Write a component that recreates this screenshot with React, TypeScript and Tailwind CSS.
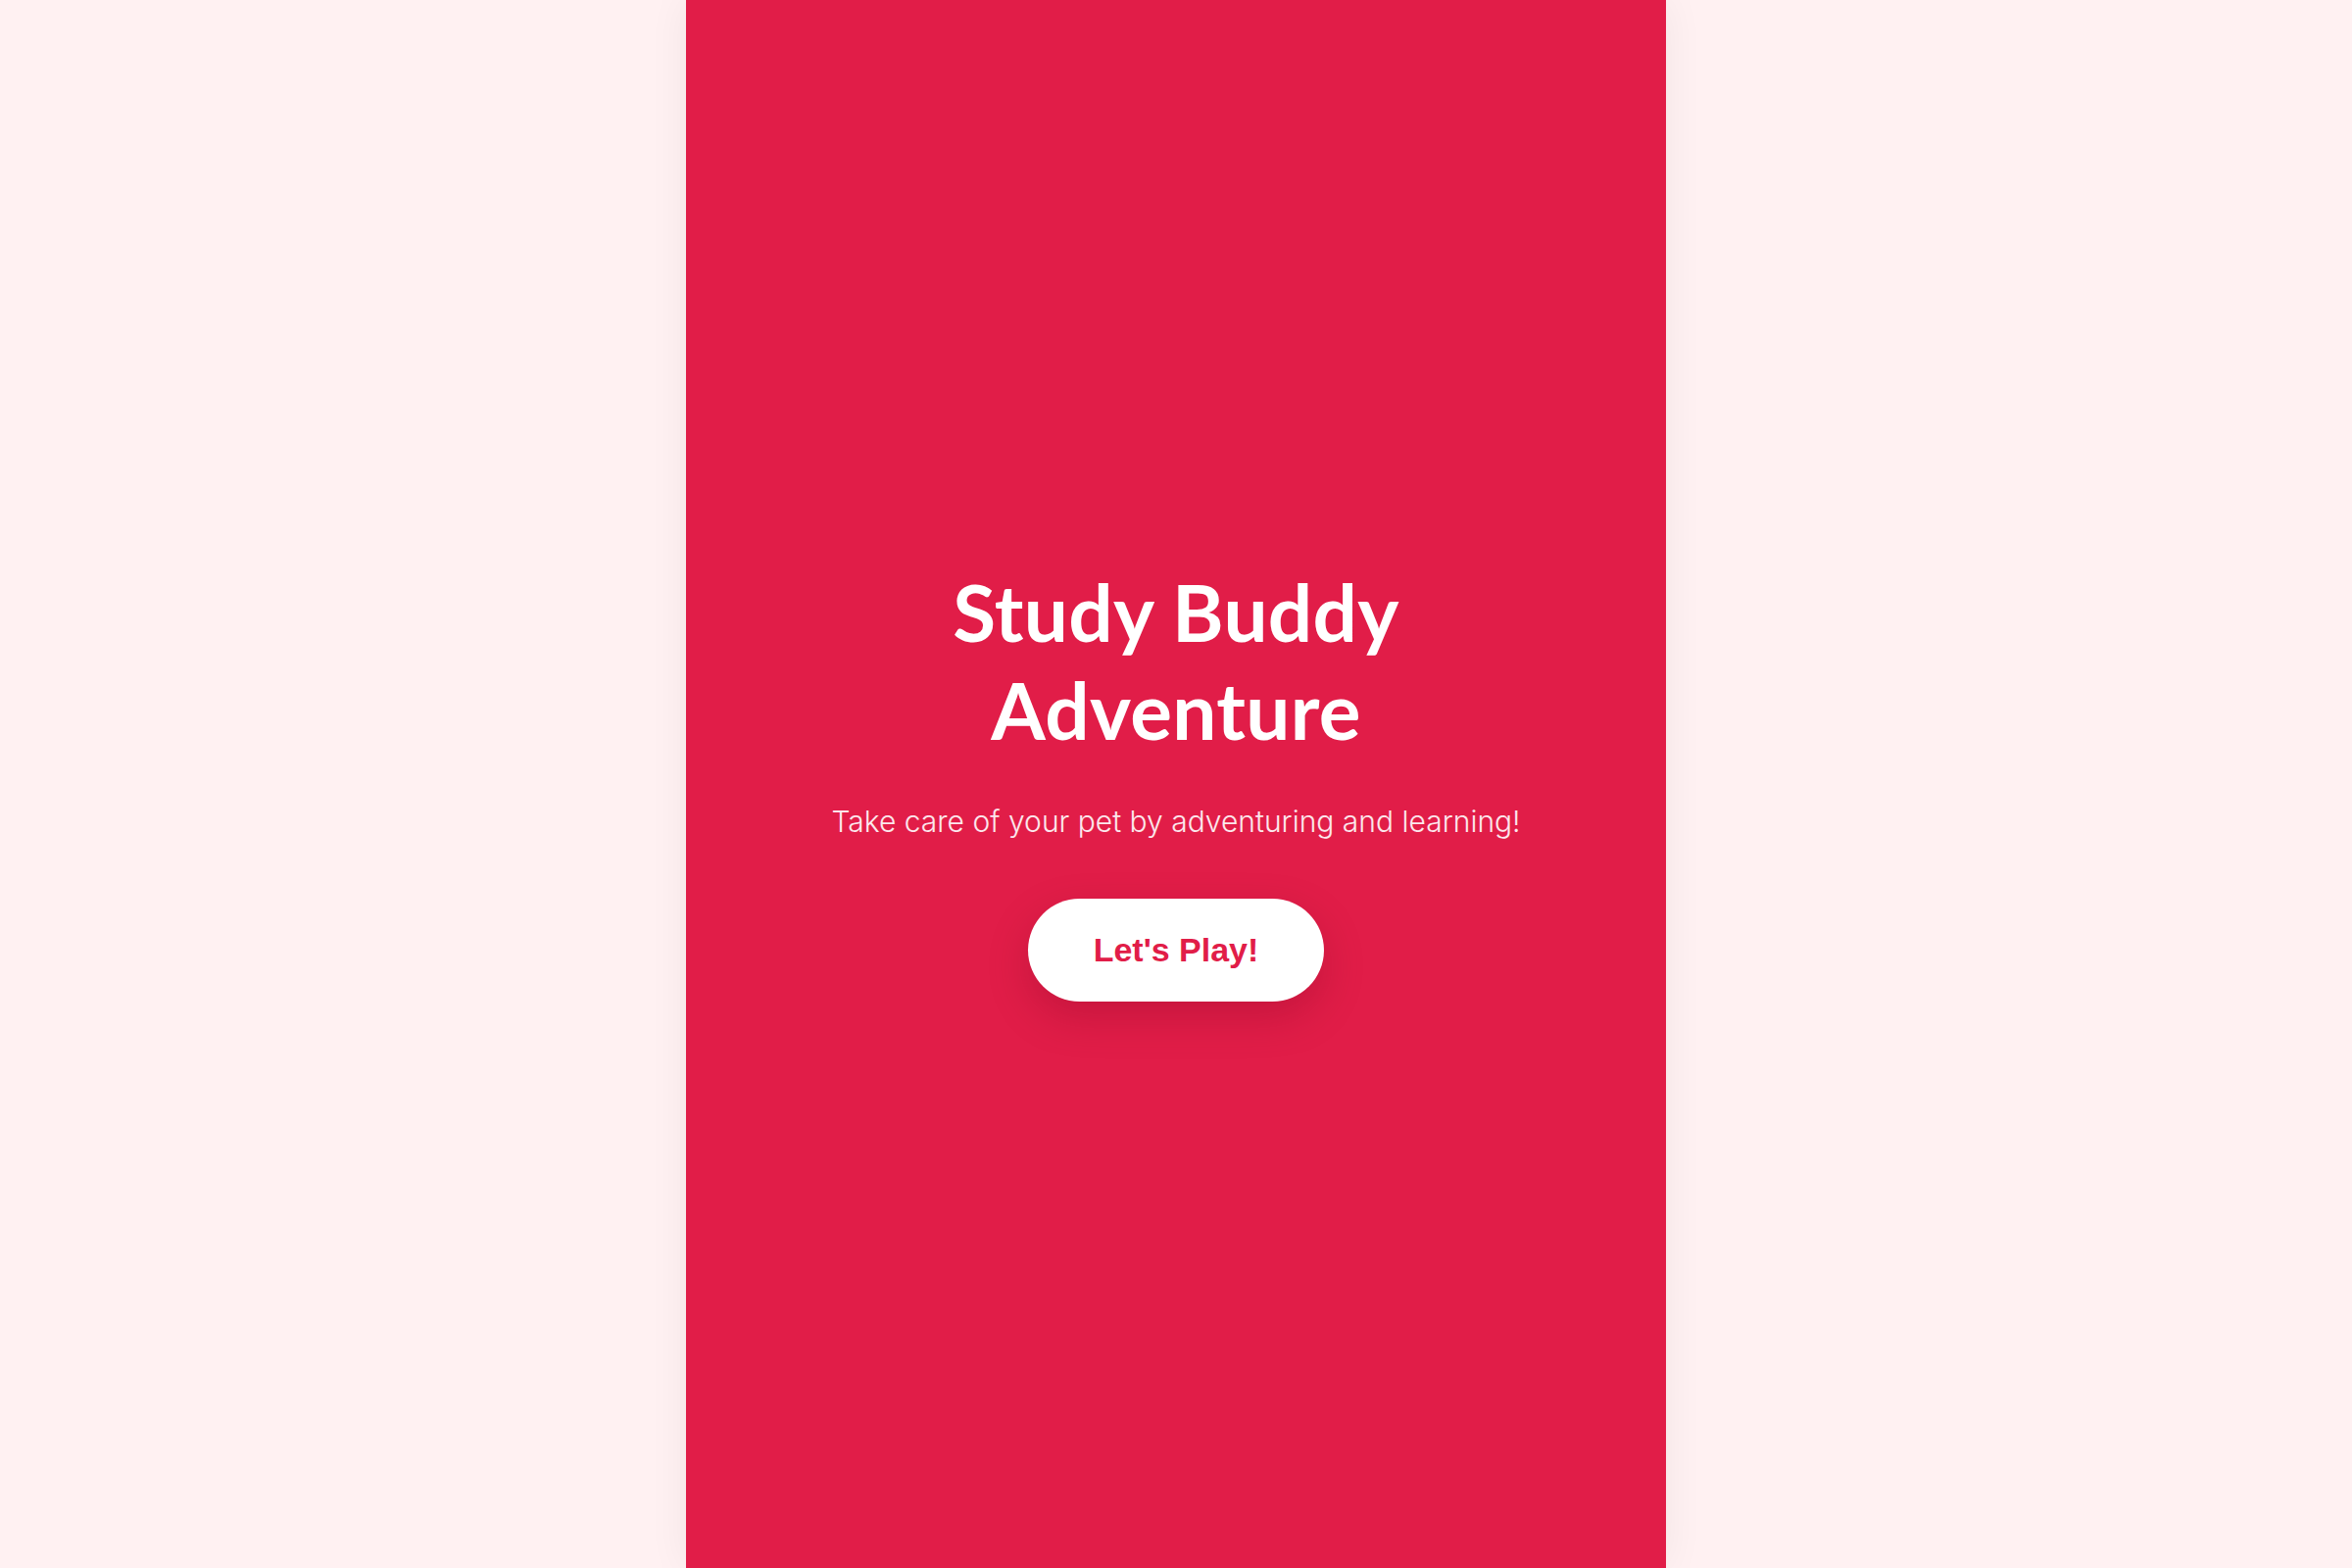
export default function App() {
  return (
    <div className="flex min-h-screen justify-center bg-[#fff1f2]">
      <main className="flex min-h-screen w-[1000px] flex-col items-center justify-center bg-[#e11d48] px-10 pb-[5px] text-center shadow-[0_0_40px_rgba(0,0,0,0.06)]">
        <h1 className="font-['Lato',sans-serif] text-[80px] font-bold leading-[100px] tracking-[0.3px] text-white">
          Study Buddy
          <br />
          Adventure
        </h1>
        <p className="mt-[44px] font-['Inter',sans-serif] text-[30px] font-light leading-[40px] text-white/90">
          Take care of your pet by adventuring and learning!
        </p>
        <button
          type="button"
          className="mt-[59px] rounded-full bg-white px-[67px] py-[33px] font-['Liberation_Sans',Arial,sans-serif] text-[34px] font-bold leading-[39px] text-[#e11d48] shadow-[0_16px_40px_rgba(120,0,30,0.25)]"
        >
          Let's Play!
        </button>
      </main>
    </div>
  )
}
